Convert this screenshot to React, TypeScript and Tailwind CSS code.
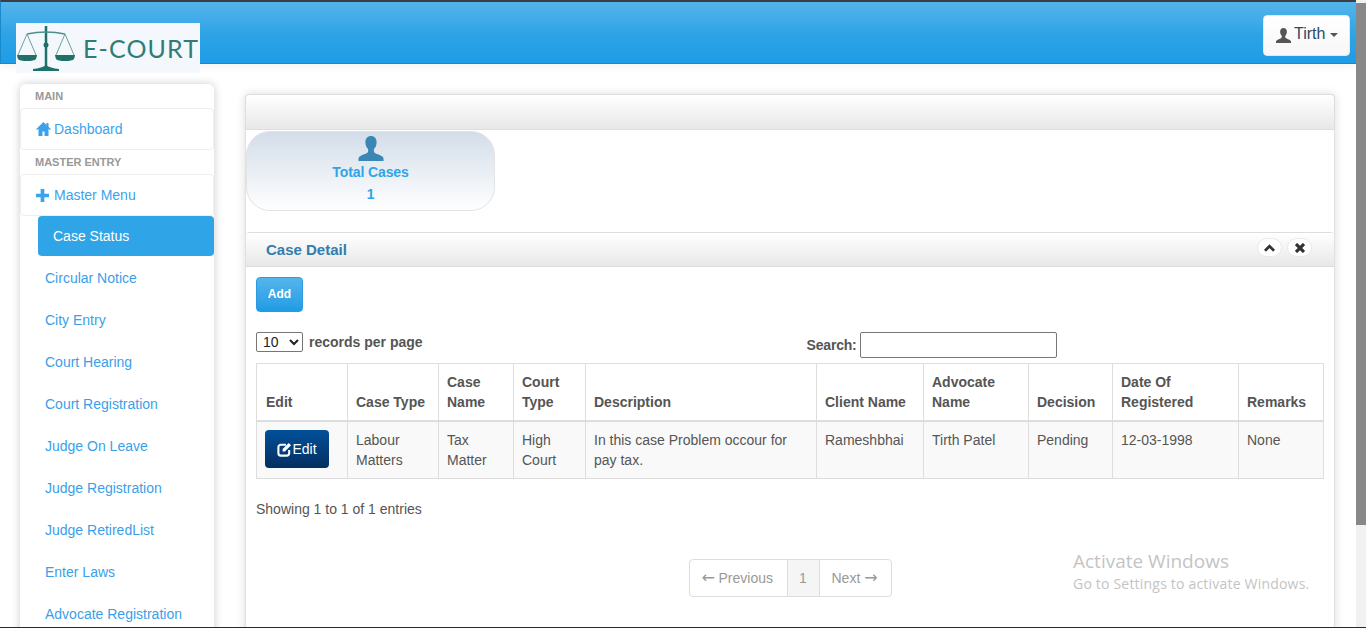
import React from 'react'

const subItems = [
  'Circular Notice',
  'City Entry',
  'Court Hearing',
  'Court Registration',
  'Judge On Leave',
  'Judge Registration',
  'Judge RetiredList',
  'Enter Laws',
  'Advocate Registration',
]

const UserIcon = ({ className }: { className: string }) => (
  <svg viewBox="0 0 24 24" className={className} fill="currentColor">
    <path d="M12 0C8.600 0 6.600 2.600 6.600 6c0 2.800 1 5 2.600 6.500v2.300c0 1.300-2.200 2-4.600 3C2.600 18.600 1 19.600 0 21v3h24v-3c-1-1.400-2.600-2.400-4.600-3.200-2.400-1-4.600-1.700-4.600-3v-2.300c1.600-1.500 2.600-3.700 2.600-6.500C17.400 2.600 15.400 0 12 0z" />
  </svg>
)

const HomeIcon = () => (
  <svg viewBox="0 0 15 14" className="w-[15px] h-[14px] shrink-0" fill="currentColor">
    <path d="M7.500 0L0 7.200 1 8l1.500-1.300V14h4V9.500h2V14h4V6.700L14 8l1-.8-2.500-2.400V1h-2v1.900L7.500 0z" />
  </svg>
)

const PlusIcon = () => (
  <svg viewBox="0 0 14 14" className="w-[13px] h-[13px] shrink-0" fill="currentColor">
    <path d="M5 0h4v5h5v4H9v5H5V9H0V5h5V0z" />
  </svg>
)

const EditIcon = () => (
  <svg viewBox="0 0 16 16" className="w-[15px] h-[15px] shrink-0" fill="none" stroke="currentColor">
    <path d="M9.500 3H4a2.500 2.500 0 0 0-2.500 2.500V12A2.500 2.500 0 0 0 4 14.500h6.500A2.500 2.500 0 0 0 13 12V8.500" strokeWidth="2.200" />
    <path d="M6 7.500L12.500 1 15 3.500 8.500 10H6V7.500z" fill="currentColor" stroke="none" />
  </svg>
)

const ChevronUp = () => (
  <svg viewBox="0 0 12 8" className="w-[11px] h-[8px]" fill="none" stroke="#333" strokeWidth="3">
    <path d="M1 7l5-5 5 5" />
  </svg>
)

const CloseIcon = () => (
  <svg viewBox="0 0 10 10" className="w-[10px] h-[10px]" fill="none" stroke="#333" strokeWidth="3.200">
    <path d="M1 1l8 8M9 1l-8 8" />
  </svg>
)

const Logo = () => (
  <div className="relative z-10 flex items-center w-[184px] h-[50px] bg-[#f4f7fc]">
    <svg viewBox="0 0 60 50" className="w-[60px] h-[50px] shrink-0">
      <path d="M30 3v40" stroke="#1f7068" strokeWidth="2.500" />
      <path d="M11 11q19-4 38 0" stroke="#4f8f8a" strokeWidth="1.500" fill="none" />
      <path d="M11 11L2 32M11 11l9 21M49 11l-9 21M49 11l9 21" stroke="#6aa3a0" strokeWidth="1" fill="none" />
      <path d="M1 32h20q0 1-1 4-2 2-9 2-7 0-9-2-1-3-1-4zM39 32h20q0 1-1 4-2 2-9 2-7 0-9-2-1-3-1-4z" fill="#1f7068" />
      <circle cx="30" cy="22" r="2.500" fill="#1f7068" />
      <path d="M17 48v-2q9-1 13-4 4 3 13 4v2z" fill="#1f7068" />
    </svg>
    <span className="ml-[7px] text-[25px] leading-none tracking-[1.1px] text-[#2f7d78] whitespace-nowrap font-['Lato',sans-serif]">E-COURT</span>
  </div>
)

const headers = [
  ['Edit', 'w-[91px]'],
  ['Case Type', 'w-[91px]'],
  ['Case Name', 'w-[75px]'],
  ['Court Type', 'w-[72px]'],
  ['Description', 'w-[231px]'],
  ['Client Name', 'w-[107px]'],
  ['Advocate Name', 'w-[105px]'],
  ['Decision', 'w-[84px]'],
  ['Date Of Registered', 'w-[126px]'],
  ['Remarks', 'w-[85px]'],
]

const cells = [
  'Labour Matters',
  'Tax Matter',
  'High Court',
  'In this case Problem occour for pay tax.',
  'Rameshbhai',
  'Tirth Patel',
  'Pending',
  '12-03-1998',
  'None',
]

export default function App() {
  return (
    <div className="relative flex w-[1366px] h-[628px] overflow-hidden bg-white text-[14px] leading-[20px] text-[#555] font-['Liberation_Sans',Arial,sans-serif]">
      <div className="flex flex-col w-[1356px] h-full shrink-0 overflow-hidden">
        {/* Top bar */}
        <header className="flex justify-between items-start shrink-0 h-[64px] border-t-2 border-t-[#3a3f44] border-b border-b-[#178acc] border-l border-l-[#178acc] bg-gradient-to-b from-[#54b4eb] via-[#2fa4e7] to-[#1d9ce5] pl-[15px] pr-[6px] pt-[21px] shadow-[0_2px_8px_rgba(0,0,0,0.06)]">
          <Logo />
          <button className="flex items-center -mt-[8px] w-[87px] h-[41px] pl-[12px] rounded-[4px] bg-gradient-to-b from-white to-[#f7f7f7] border border-[#e8e8e8] text-[16px] text-[#2a4a66]">
            <UserIcon className="w-[15px] h-[15px] -mt-[1px] text-[#555]" />
            <span className="ml-[3px] -mt-[3px]">Tirth</span>
            <span className="ml-[5px] -mt-[1px] border-x-[4px] border-x-transparent border-t-[4px] border-t-[#555]" />
          </button>
        </header>

        <div className="flex flex-1 min-h-0">
          {/* Sidebar */}
          <aside className="w-[194px] ml-[20px] mt-[20px] shrink-0 self-start bg-white rounded-t-[6px] shadow-[0_0_10px_rgba(0,0,0,0.2)] h-[600px]">
            <div className="h-[24px] pl-[15px] pt-[2px] text-[11px] font-bold text-[#999] leading-[20px]">MAIN</div>
            <a className="flex items-center h-[42px] pl-[15px] gap-[3px] border border-[#eeeeee] rounded-[4px] text-[#3aa3ec]">
              <HomeIcon />
              <span>Dashboard</span>
            </a>
            <div className="h-[24px] pl-[15px] pt-[1px] text-[11px] font-bold text-[#999] leading-[22px]">MASTER ENTRY</div>
            <a className="flex items-center h-[42px] pl-[15px] gap-[5px] border border-[#eeeeee] rounded-[4px] text-[#3aa3ec]">
              <PlusIcon />
              <span>Master Menu</span>
            </a>
            <div className="pl-[18px]">
              <a className="flex items-center h-[40px] pl-[15px] rounded-[4px] bg-[#2fa4e7] text-white">Case Status</a>
              {subItems.map(item => (
                <a key={item} className="flex items-center h-[42px] pl-[7px] mt-[1px] -mb-[1px] text-[#3a9fe8]">{item}</a>
              ))}
            </div>
          </aside>

          {/* Main content */}
          <main className="w-[1090px] ml-[31px] mt-[30px] shrink-0 h-[600px] border-x border-[#e0e0e0] rounded-t-[4px] shadow-[0_0_10px_rgba(0,0,0,0.14)]">
            <div className="h-[36px] bg-gradient-to-b from-white to-[#e8e8e8] border border-[#dddddd] -mx-px rounded-t-[4px]" />
            <div className="flex flex-col items-center justify-start w-[249px] h-[80px] mt-px rounded-[24px] border border-[#e3e3e3] bg-gradient-to-b from-[#d3dde9] to-white font-bold tracking-[-0.1px] text-[#2fa4e7]">
              <UserIcon className="w-[26px] h-[25px] mt-[4px] text-[#3a87b5]" />
              <div className="mt-[1px]">Total Cases</div>
              <div className="mt-[2px]">1</div>
            </div>

            {/* Case Detail panel */}
            <section className="mt-[21px] border-t border-[#dddddd] rounded-t-[4px] overflow-hidden">
              <div className="flex items-center justify-between h-[34px] pl-[20px] pr-[22px] bg-gradient-to-b from-white to-[#e8e8e8] border-b border-[#dddddd]">
                <h2 className="text-[15px] font-bold text-[#317eac]">Case Detail</h2>
                <div className="flex gap-[5px] -mt-[4px]">
                  <span className="flex items-center justify-center w-[25px] h-[19px] rounded-full bg-white border border-[#e8e8e8]"><ChevronUp /></span>
                  <span className="flex items-center justify-center w-[25px] h-[19px] rounded-full bg-white border border-[#e8e8e8]"><CloseIcon /></span>
                </div>
              </div>

              <div className="px-[10px] pt-[10px]">
                <button className="block w-[47px] h-[35px] pb-[2px] rounded-[4px] bg-gradient-to-b from-[#54b4eb] to-[#1d9ce5] border border-[#2a9be0] text-[12px] font-bold text-white">Add</button>

                <div className="flex items-start h-[51px] pt-[20px]">
                  <select className="w-[47px] h-[20px] border border-[#767676] rounded-[2px] bg-white text-[14px] text-[#222] pl-[2px]" defaultValue="10">
                    <option>10</option>
                  </select>
                  <span className="ml-[6px] font-bold leading-[20px]">records per page</span>
                  <label className="flex items-start ml-[384px] font-bold leading-[26px]">
                    <span className="w-[51px] tracking-[-0.2px]">Search:</span>
                    <input className="ml-[2px] w-[197px] h-[26px] border border-[#767676] rounded-[2px] bg-white" />
                  </label>
                </div>

                <table className="table-fixed w-[1067px] border-collapse border border-[#dddddd]">
                  <colgroup>
                    {headers.map(([label, width]) => <col key={label} className={width} />)}
                  </colgroup>
                  <thead>
                    <tr className="h-[56px]">
                      {headers.map(([label]) => (
                        <th key={label} className="border border-[#dddddd] border-b-2 p-[8px] align-bottom text-left font-bold first:pl-[9px]">{label}</th>
                      ))}
                    </tr>
                  </thead>
                  <tbody>
                    <tr className="h-[57px] bg-[#f9f9f9]">
                      <td className="border border-[#dddddd] pl-[8px] align-top pt-[8px]">
                        <button className="flex items-center justify-center w-[64px] h-[38px] rounded-[4px] bg-gradient-to-b from-[#02509a] to-[#032f60] text-white">
                          <EditIcon />
                          <span>Edit</span>
                        </button>
                      </td>
                      {cells.map(text => (
                        <td key={text} className="border border-[#dddddd] p-[8px] align-top">{text}</td>
                      ))}
                    </tr>
                  </tbody>
                </table>

                <div className="mt-[20px]">Showing 1 to 1 of 1 entries</div>

                <div className="flex justify-center mt-[40px]">
                  <nav className="flex h-[38px] border border-[#dddddd] rounded-[4px] text-[#999]">
                    <span className="flex items-center pl-[12px] w-[97px] whitespace-nowrap">
                      <span className="w-[17px] text-[16px] font-['DejaVu_Sans',sans-serif]">←</span>Previous
                    </span>
                    <span className="flex items-center justify-center w-[33px] bg-[#f5f5f5] border-x border-[#dddddd]">1</span>
                    <span className="flex items-center pl-[12px] w-[71px] whitespace-nowrap">
                      Next<span className="w-[16px] ml-[4px] text-[16px] font-['DejaVu_Sans',sans-serif]">→</span>
                    </span>
                  </nav>
                </div>
              </div>
            </section>
          </main>
        </div>
      </div>

      {/* Scrollbar */}
      <div className="w-[10px] h-full bg-[#f1f1f1] pt-[3px]">
        <div className="h-[522px] bg-[#888888]" />
      </div>

      {/* Windows watermark */}
      <div className="absolute left-[1073px] top-[548px] text-[#c4c4c4] font-['Open_Sans',sans-serif] pointer-events-none">
        <div className="text-[19px] leading-[26px]">Activate Windows</div>
        <div className="text-[14px] leading-[20px] tracking-[0.2px]">Go to Settings to activate Windows.</div>
      </div>
      <div className="absolute left-0 bottom-0 w-full h-px bg-[#2a2a2a]" />
    </div>
  )
}
